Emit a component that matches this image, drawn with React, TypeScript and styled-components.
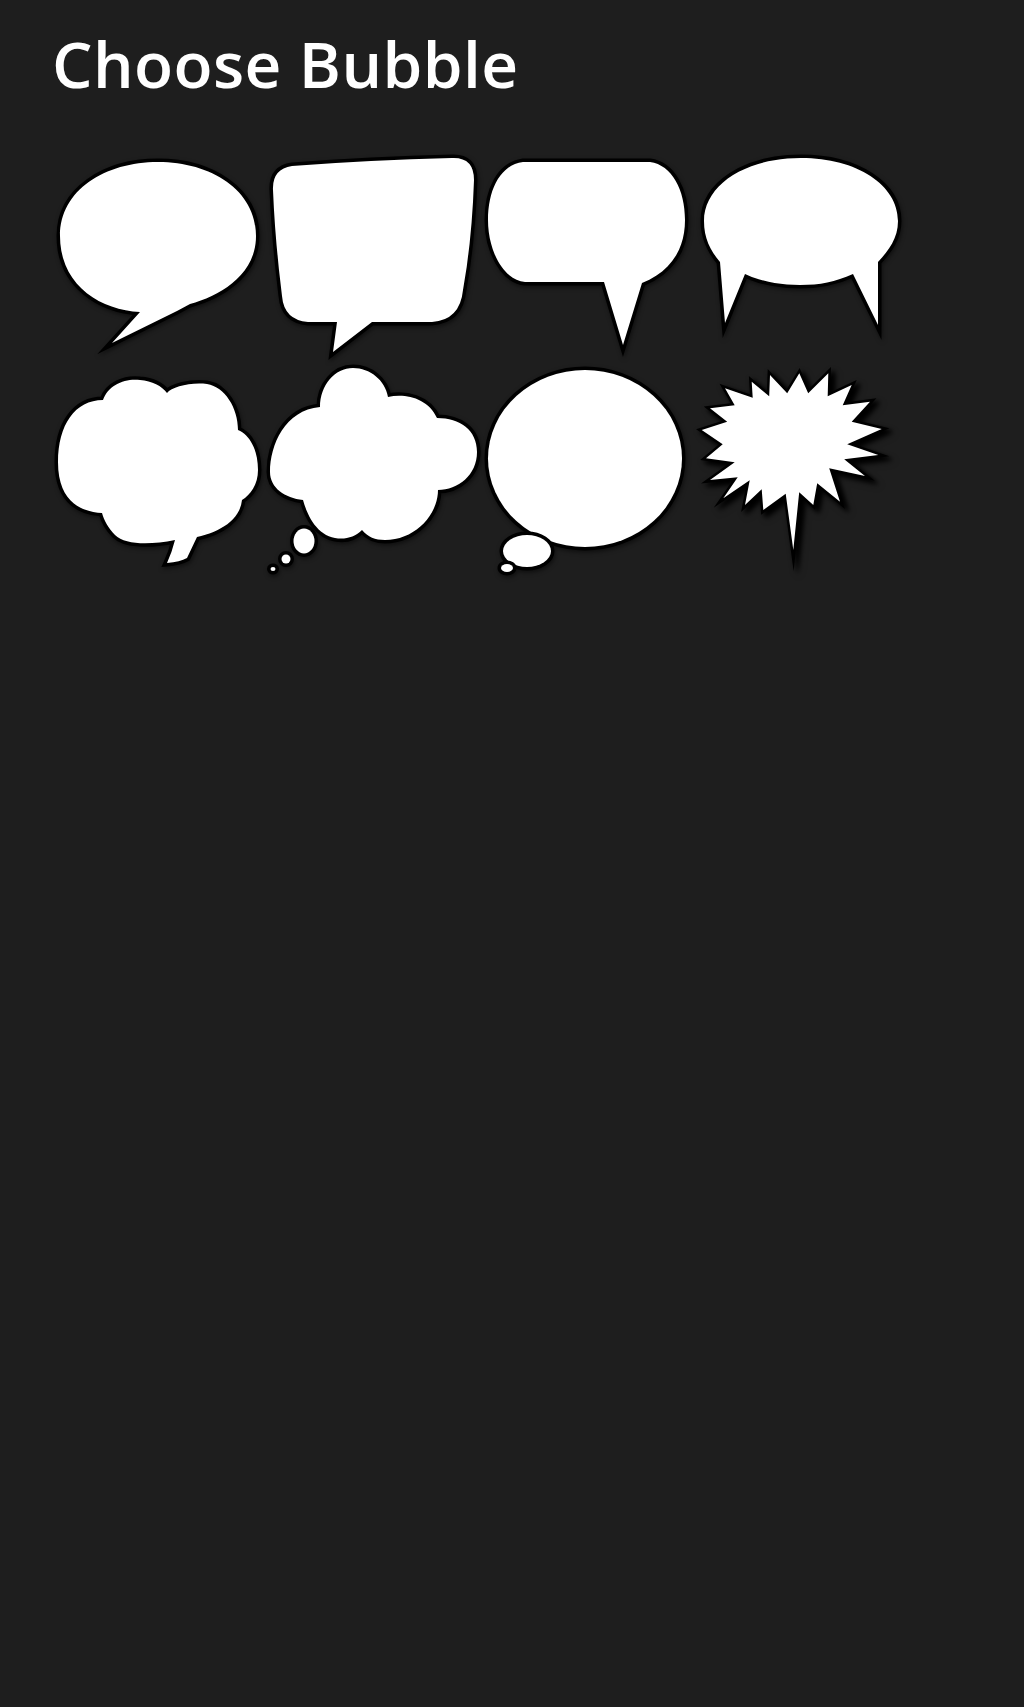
import type { ReactNode } from "react";
import styled, { createGlobalStyle } from "styled-components";

const GlobalStyle = createGlobalStyle`
  html, body {
    margin: 0;
    padding: 0;
    background-color: #1e1e1e;
  }
`;

const Page = styled.div`
  width: 1024px;
  height: 1707px;
  padding: 22px 0 0 50px;
  box-sizing: border-box;
  background-color: #1e1e1e;
  overflow: hidden;
`;

const Title = styled.h1`
  margin: 0 0 44px;
  padding-left: 2px;
  height: 84px;
  line-height: 84px;
  font-family: "Open Sans", "Noto Sans", sans-serif;
  font-size: 64px;
  font-weight: 600;
  letter-spacing: 0.4px;
  color: #ffffff;
  filter: blur(0.6px);
`;

const BubbleGrid = styled.div`
  display: grid;
  grid-template-columns: repeat(4, 216px);
  grid-auto-rows: 215px;
`;

const BubbleSvg = styled.svg`
  display: block;
  width: 216px;
  height: 215px;
  overflow: visible;
  filter: blur(0.7px) drop-shadow(1px 2px 2px rgba(0, 0, 0, 0.5));

  path,
  ellipse,
  polygon {
    fill: #ffffff;
    stroke: #000000;
    stroke-width: 7px;
    stroke-linejoin: miter;
    stroke-miterlimit: 12;
    paint-order: stroke;
  }
`;

const StarShape = styled.polygon`
  filter: drop-shadow(4px 3px 2px #000000);

  && {
    stroke-width: 5px;
    stroke-miterlimit: 14;
  }
`;

// Shapes are drawn in page coordinates, each cell's viewBox selects its own part
const Bubble = ({ col, row, children }: { col: number; row: number; children: ReactNode }) => (
  <BubbleSvg viewBox={`${50 + col * 216} ${150 + row * 215} 216 215`}>{children}</BubbleSvg>
);

// Alternating tip and valley, as read from the zoomed crop of the reference
const starOutline = [
  [765, 115], [835, 130], [845, 95], [890, 125], [900, 75], [950, 115], [988, 70], [1020, 115],
  [1075, 70], [1085, 125], [1145, 105], [1135, 155], [1200, 155], [1165, 210], [1235, 237],
  [1150, 285], [1225, 315], [1140, 335], [1185, 378], [1090, 365], [1110, 455], [1050, 415],
  [1030, 465], [990, 445], [970, 600], [945, 450], [880, 480], [865, 435], [825, 465], [825, 405],
  [760, 445], [785, 395], [720, 390], [775, 345], [708, 325], [735, 285], [695, 240], [750, 210],
  [720, 175], [775, 155],
];

const starPoints = starOutline
  .map(([x, y], i) => {
    const isTail = i === 24;
    const isValley = i % 2 === 1;
    // valleys are pulled in towards the middle so that the spikes stay thin under the outline
    const pull = isValley && !isTail ? 0.1 : 0;
    const px = x + (965 - x) * pull;
    const py = y + (265 - y) * pull;
    return `${(470 + px / 3).toFixed(1)},${(350 + py / 3).toFixed(1)}`;
  })
  .join(" ");

const App = () => (
  <Page>
    <GlobalStyle />
    <Title>Choose Bubble</Title>
    <BubbleGrid>
      <Bubble col={0} row={0}>
        <path d="M60 236 C60 190 105 162 158 162 C211 162 256 190 256 236 C256 275 220 296 190 304 L177 311 L112 343 L140 312 C100 310 60 285 60 236 Z" />
      </Bubble>
      <Bubble col={1} row={0}>
        <path d="M273 190 Q272 169 292 166 Q370 160 452 158 Q474 157 474 180 Q472 240 463 290 Q460 320 432 322 L372 322 L333 352 L337 322 L308 322 Q284 320 282 296 Q275 240 273 190 Z" />
      </Bubble>
      <Bubble col={2} row={0}>
        <path d="M523 162 L650 162 C672 165 685 190 685 220 C685 250 670 272 642 283 L623 345 L604 282 L525 282 C503 280 488 250 488 220 C488 190 500 165 523 162 Z" />
      </Bubble>
      <Bubble col={3} row={0}>
        <path d="M720 262 C710 250 704 238 704 221 C704 185 745 158 801 158 C857 158 898 185 898 221 C898 238 889 250 878 262 L878 325 L853 274 C835 282 820 285 800 285 C780 285 762 282 745 274 L725 323 Z" />
      </Bubble>
      <Bubble col={0} row={1}>
        <path d="M102 513 C85 512 58 505 58 462 C58 425 75 400 103 400 C108 385 125 378 140 380 C152 381 162 386 167 393 C172 387 190 382 207 384 C225 387 238 408 238 430 C250 435 258 450 258 470 C258 485 250 495 242 500 C240 520 220 532 197 537 L187 558 Q180 562 167 563 Q172 552 175 540 C150 545 125 545 115 535 C108 528 104 520 102 513 Z" />
      </Bubble>
      <Bubble col={1} row={1}>
        <path d="M320 407 C320 385 335 368 353 368 C370 368 385 380 388 397 C405 393 428 398 437 418 C460 418 477 430 477 452 C477 475 458 490 438 490 C438 515 415 540 385 540 C375 540 368 537 362 530 C355 537 345 540 335 538 C318 535 308 518 303 500 C285 498 270 488 270 472 C270 445 285 410 320 407 Z" />
        <ellipse cx="304" cy="541" rx="10.5" ry="12.5" />
        <ellipse cx="286" cy="559" rx="4.5" ry="4.5" />
        <ellipse cx="273" cy="569" rx="2.5" ry="2" />
      </Bubble>
      <Bubble col={2} row={1}>
        <ellipse cx="585" cy="458.5" rx="97" ry="88.5" />
        <ellipse cx="527" cy="551" rx="24" ry="16" />
        <ellipse cx="507" cy="568" rx="6" ry="4" />
      </Bubble>
      <Bubble col={3} row={1}>
        <StarShape points={starPoints} />
      </Bubble>
    </BubbleGrid>
  </Page>
);

export default App;
